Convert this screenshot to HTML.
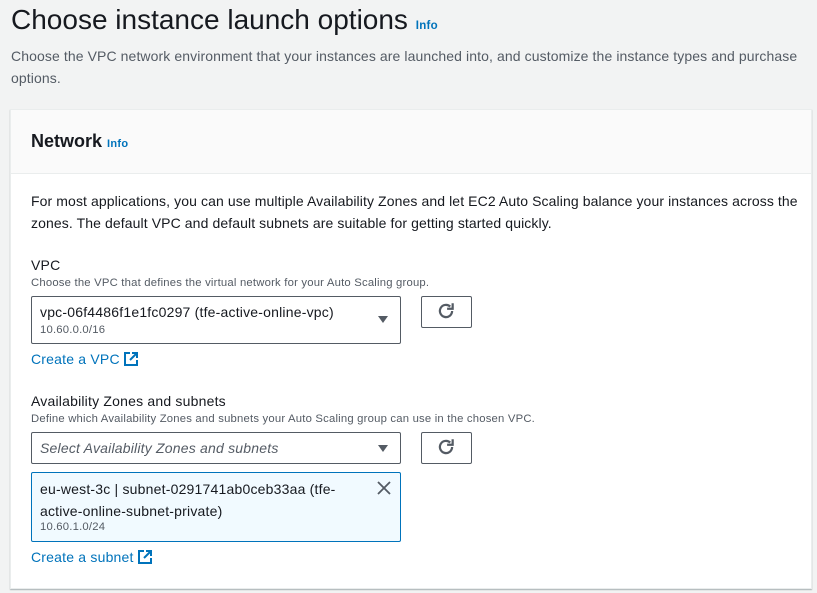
<!DOCTYPE html>
<html><head><meta charset="utf-8"><style>
*{box-sizing:border-box;margin:0;padding:0}
body{width:817px;height:593px;background:#f2f3f3;font-family:"Liberation Sans",sans-serif;color:#16191f;position:relative;overflow:hidden}
.a{position:absolute;white-space:nowrap}
.info{color:#0073bb;font-weight:bold;font-size:11px;letter-spacing:0.3px}
.box{position:absolute;border:1px solid #545b64;border-radius:2px;background:#fff}
.btn{position:absolute;border:1px solid #545b64;border-radius:2px;background:#fff;width:51px;height:32px}
.link{color:#0073bb;font-size:14px;letter-spacing:0.2px}
.small{font-size:11.3px;color:#545b64;letter-spacing:0.2px}
.t{font-size:14px;letter-spacing:0.2px}
</style></head><body>
<div class="a" style="left:11px;top:4px;font-size:28px;color:#16191f">Choose instance launch options <span class="info" style="font-size:11.5px">Info</span></div>
<div class="a t" style="left:11px;top:45px;line-height:22px;color:#545b64;white-space:normal;width:800px;letter-spacing:0.1px">Choose the VPC network environment that your instances are launched into, and customize the instance types and purchase options.</div>
<div style="position:absolute;left:10px;top:109px;width:802px;height:480px;background:#fff;border:1px solid #eaeded;box-shadow:0 1px 1px rgba(0,28,36,.3)">
 <div style="height:64px;background:#fafafa;border-bottom:1px solid #eaeded"></div>
</div>
<div class="a" style="left:31px;top:131px;font-size:18px;font-weight:bold">Network <span class="info">Info</span></div>
<div class="a t" style="left:31px;top:190px;line-height:22px;white-space:normal;width:770px;letter-spacing:0.1px">For most applications, you can use multiple Availability Zones and let EC2 Auto Scaling balance your instances across the zones. The default VPC and default subnets are suitable for getting started quickly.</div>
<div class="a t" style="left:31px;top:257px">VPC</div>
<div class="a small" style="left:31px;top:277px">Choose the VPC that defines the virtual network for your Auto Scaling group.</div>
<div class="box" style="left:31px;top:296px;width:370px;height:48px"></div>
<div class="a t" style="left:40px;top:304px">vpc-06f4486f1e1fc0297 (tfe-active-online-vpc)</div>
<div class="a small" style="left:40px;top:324px">10.60.0.0/16</div>
<svg class="a" style="left:377px;top:315px" width="12" height="9"><path d="M1 1h10L6 8z" fill="#545b64"/></svg>
<div class="btn" style="left:421px;top:296px"></div>
<svg class="a" style="left:436px;top:301px" width="20" height="20" viewBox="0 0 18 18"><path d="M14.5 9a5.5 5.5 0 1 1-1.7-4" fill="none" stroke="#545b64" stroke-width="2"/><path d="M15 2v5h-5" fill="none" stroke="#545b64" stroke-width="2"/></svg>
<div class="a link" style="left:31px;top:351px">Create a VPC <svg width="14" height="14" viewBox="0 0 14 14" style="vertical-align:-2px"><path d="M6 1H1v12h12V8M8 1h5v5M13 1L6 8" fill="none" stroke="#0073bb" stroke-width="2"/></svg></div>
<div class="a t" style="left:31px;top:393px">Availability Zones and subnets</div>
<div class="a small" style="left:31px;top:413px">Define which Availability Zones and subnets your Auto Scaling group can use in the chosen VPC.</div>
<div class="box" style="left:31px;top:432px;width:370px;height:32px"></div>
<div class="a t" style="left:40px;top:440px;font-style:italic;color:#545b64">Select Availability Zones and subnets</div>
<svg class="a" style="left:377px;top:444px" width="12" height="9"><path d="M1 1h10L6 8z" fill="#545b64"/></svg>
<div class="btn" style="left:421px;top:432px"></div>
<svg class="a" style="left:436px;top:437px" width="20" height="20" viewBox="0 0 18 18"><path d="M14.5 9a5.5 5.5 0 1 1-1.7-4" fill="none" stroke="#545b64" stroke-width="2"/><path d="M15 2v5h-5" fill="none" stroke="#545b64" stroke-width="2"/></svg>
<div class="a" style="left:31px;top:472px;width:370px;height:70px;background:#f1faff;border:1px solid #0073bb;border-radius:2px"></div>
<div class="a t" style="left:40px;top:478px;line-height:22px">eu-west-3c | subnet-0291741ab0ceb33aa (tfe-<br>active-online-subnet-private)</div>
<div class="a small" style="left:40px;top:521px">10.60.1.0/24</div>
<svg class="a" style="left:377px;top:481px" width="14" height="14"><path d="M1 1l12 12M13 1L1 13" stroke="#545b64" stroke-width="1.8"/></svg>
<div class="a link" style="left:31px;top:549px">Create a subnet <svg width="14" height="14" viewBox="0 0 14 14" style="vertical-align:-2px"><path d="M6 1H1v12h12V8M8 1h5v5M13 1L6 8" fill="none" stroke="#0073bb" stroke-width="2"/></svg></div>
</body></html>
